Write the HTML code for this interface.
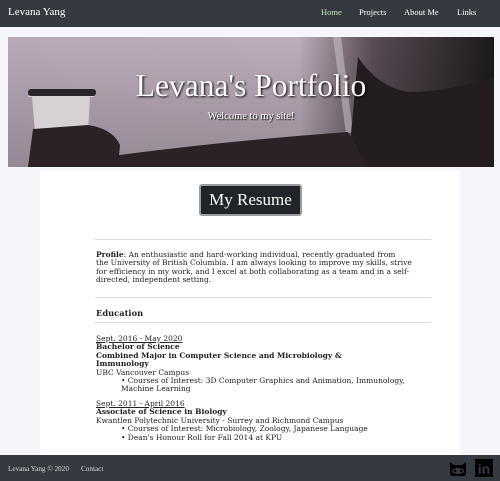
<!DOCTYPE html>
<html><head><meta charset="utf-8"><style>
*{margin:0;padding:0;box-sizing:border-box}
body{width:500px;height:481px;overflow:hidden;background:#f5f6fa;font-family:"Liberation Serif",serif;position:relative;color:#222}
.nav{position:absolute;left:0;top:0;width:500px;height:27px;background:#343a40;color:#fff}
.nav .b{position:absolute;left:8px;top:6px;font-size:11px}
.nav a{position:absolute;top:7px;font-size:8.5px;color:#fff}
.hero{position:absolute;left:8px;top:37px;width:486px;height:130px;overflow:hidden}
.col{position:absolute;left:40px;top:171px;width:420px;height:284px;background:#fff}
.btn{position:absolute;left:199px;top:184px;width:103px;height:32px;background:#212529;border:2px solid #9a9ca0;border-radius:3px;color:#fff;font-size:17px;text-align:center;line-height:28px}
hr{position:absolute;left:95px;width:336px;border:0;border-top:1px solid #ddd}
.t{position:absolute;left:96px;font-family:"DejaVu Serif",serif;font-size:7.5px;line-height:8.4px;color:#222;white-space:nowrap}
.foot{position:absolute;left:0;top:455px;width:500px;height:26px;background:#343a40;color:#ddd;font-size:7.2px}
</style></head><body>
<div class="nav"><span class="b">Levana Yang</span>
<a style="left:321px;color:#c5e6b0">Home</a><a style="left:359px">Projects</a><a style="left:404px">About Me</a><a style="left:457px">Links</a></div>
<div class="hero">
<svg width="486" height="130" viewBox="0 0 486 130">
<defs><linearGradient id="g" x1="0" x2="1" y1="0" y2="0">
<stop offset="0" stop-color="#b9aab8"/><stop offset="0.6" stop-color="#bcadba"/><stop offset="0.75" stop-color="#5a4c55"/><stop offset="1" stop-color="#1c1a1c"/></linearGradient>
<linearGradient id="v" x1="0" x2="0" y1="0" y2="1"><stop offset="0" stop-color="#000" stop-opacity="0"/><stop offset="1" stop-color="#000" stop-opacity=".2"/></linearGradient></defs>
<rect width="486" height="130" fill="url(#g)"/>
<rect width="486" height="130" fill="url(#v)"/>
<path d="M325 0 L333 0 L345 95 L338 97 Z" fill="#d4ccd2" opacity=".5"/>
<path d="M350 20 Q370 50 400 55 Q440 55 486 40 L486 130 L340 130 Z" fill="#231d21"/>
<path d="M60 125 Q200 105 340 95 L360 130 L40 130 Z" fill="#2a2226"/>
<path d="M22 56 L24 54 L84 54 L86 60 L82 60 L80 95 L27 95 L24 60 L20 60 Z" fill="#d6d2d4"/>
<rect x="20" y="52" width="68" height="7" rx="3" fill="#2c2628"/>
<path d="M25 92 L80 88 Q105 92 112 108 L110 130 L20 130 Z" fill="#2a2224"/>
</svg>
<div style="position:absolute;left:0;width:486px;top:31px;text-align:center;color:#fff;font-size:31.5px;text-shadow:1px 1px 2px #000">Levana's Portfolio</div>
<div style="position:absolute;left:0;width:486px;top:74px;text-align:center;color:#fff;font-size:10.5px;text-shadow:1px 1px 1px #000">Welcome to my site!</div>
</div>
<div class="col"></div>
<div class="btn">My Resume</div>
<hr style="top:239px">
<div class="t" style="top:251px"><b>Profile</b>: An enthusiastic and hard-working individual, recently graduated from<br>the University of British Columbia. I am always looking to improve my skills, strive<br>for efficiency in my work, and I excel at both collaborating as a team and in a self-<br>directed, independent setting.</div>
<hr style="top:297px">
<div class="t" style="top:309px;font-size:8.3px"><b>Education</b></div>
<hr style="top:322px">
<div class="t" style="top:335px"><u>Sept. 2016 - May 2020</u><br><b>Bachelor of Science</b><br><b>Combined Major in Computer Science and Microbiology &amp;<br>Immunology</b><br>UBC Vancouver Campus<br>
<span style="padding-left:25px">• Courses of Interest: 3D Computer Graphics and Animation, Immunology,</span><br><span style="padding-left:25px">Machine Learning</span></div>
<div class="t" style="top:400px"><u>Sept. 2011 - April 2016</u><br><b>Associate of Science in Biology</b><br>Kwantlen Polytechnic University - Surrey and Richmond Campus<br>
<span style="padding-left:25px">• Courses of Interest: Microbiology, Zoology, Japanese Language</span><br><span style="padding-left:25px">• Dean's Honour Roll for Fall 2014 at KPU</span></div>
<div class="foot"><span style="position:absolute;left:8px;top:10px">Levana Yang © 2020</span><span style="position:absolute;left:81px;top:10px">Contact</span>
<svg style="position:absolute;left:448px;top:6px" width="20" height="16" viewBox="0 0 20 16"><path d="M2 1 L6 4 L14 4 L18 1 L18 12 Q18 15 15 15 L5 15 Q2 15 2 12 Z" fill="#000"/><ellipse cx="10" cy="10" rx="6" ry="3" fill="#343a40"/><circle cx="7" cy="10" r="1.3" fill="#000"/><circle cx="13" cy="10" r="1.3" fill="#000"/></svg>
<div style="position:absolute;left:475px;top:4px;width:18px;height:18px;background:#000;color:#343a40;font:bold 14px 'Liberation Sans',sans-serif;text-align:center;line-height:20px">in</div>
</div>
</body></html>
